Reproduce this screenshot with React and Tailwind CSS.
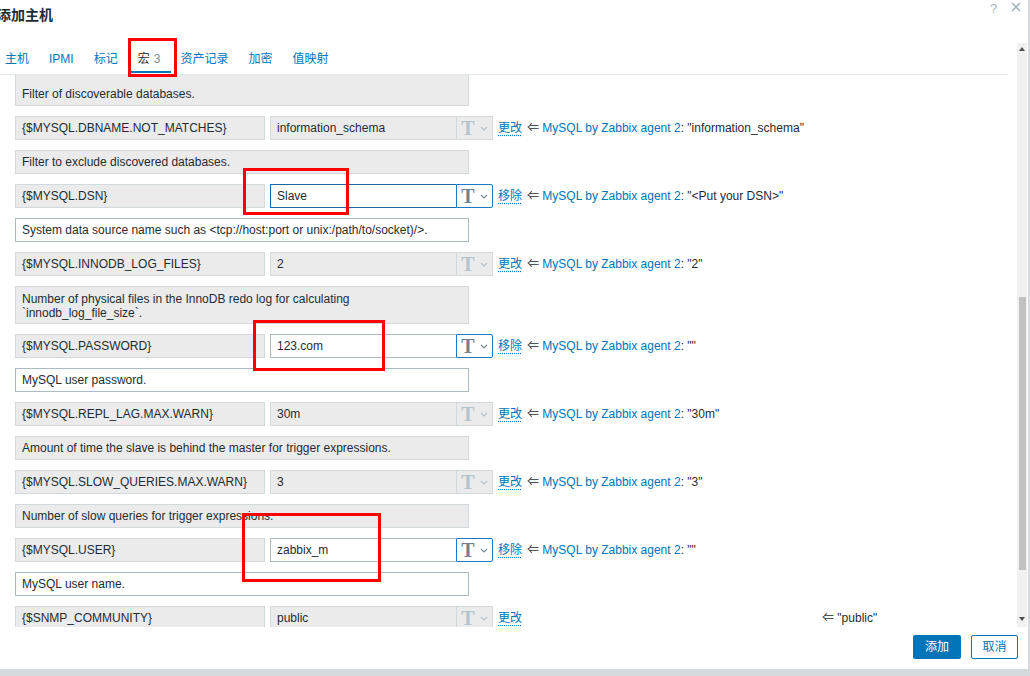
import React from "react";

const rows = [
  { kind: "desc", text: "Filter of discoverable databases.", first: true },
  { kind: "macro", macro: "{$MYSQL.DBNAME.NOT_MATCHES}", value: "information_schema", action: "更改", tpl: '"information_schema"' },
  { kind: "desc", text: "Filter to exclude discovered databases." },
  { kind: "macro", macro: "{$MYSQL.DSN}", value: "Slave", edit: true, focus: true, action: "移除", tpl: '"<Put your DSN>"' },
  { kind: "desc", text: "System data source name such as <tcp://host:port or unix:/path/to/socket)/>.", edit: true },
  { kind: "macro", macro: "{$MYSQL.INNODB_LOG_FILES}", value: "2", action: "更改", tpl: '"2"' },
  { kind: "desc", text: "Number of physical files in the InnoDB redo log for calculating\n`innodb_log_file_size`.", tall: true },
  { kind: "macro", macro: "{$MYSQL.PASSWORD}", value: "123.com", edit: true, action: "移除", tpl: '""' },
  { kind: "desc", text: "MySQL user password.", edit: true },
  { kind: "macro", macro: "{$MYSQL.REPL_LAG.MAX.WARN}", value: "30m", action: "更改", tpl: '"30m"' },
  { kind: "desc", text: "Amount of time the slave is behind the master for trigger expressions." },
  { kind: "macro", macro: "{$MYSQL.SLOW_QUERIES.MAX.WARN}", value: "3", action: "更改", tpl: '"3"' },
  { kind: "desc", text: "Number of slow queries for trigger expressions." },
  { kind: "macro", macro: "{$MYSQL.USER}", value: "zabbix_m", edit: true, action: "移除", tpl: '""' },
  { kind: "desc", text: "MySQL user name.", edit: true },
  { kind: "macro", macro: "{$SNMP_COMMUNITY}", value: "public", action: "更改", global: '"public"' },
];

const tabs = ["主机", "IPMI", "标记", "宏", "资产记录", "加密", "值映射"];

function TypeButton({ edit }) {
  return (
    <div
      className={
        "w-[37px] h-[24px] flex items-center justify-center gap-[5px] border " +
        (edit ? "bg-white border-[#1f78c1] rounded-r-[2px]" : "bg-[#ebebeb] border-[#d3dade]")
      }
    >
      <span
        className={
          "font-['Liberation_Serif',serif] font-bold text-[20px] leading-none " +
          (edit ? "text-[#6e8591]" : "text-[#b7c3ca]")
        }
      >
        T
      </span>
      <svg width="8" height="5" viewBox="0 0 8 5">
        <polyline points="1,1 4,4 7,1" fill="none" stroke={edit ? "#768d99" : "#b7c3ca"} strokeWidth="1.2" />
      </svg>
    </div>
  );
}

function MacroRow({ r }) {
  const valueCls = r.focus
    ? "bg-white border-[#1f65a0]"
    : r.edit
    ? "bg-white border-[#acbbc2]"
    : "bg-[#ebebeb] border-[#d3dade]";
  return (
    <div className="flex items-center h-[24px]">
      <div className="w-[250px] h-[24px] bg-[#ebebeb] border border-[#d3dade] flex items-center pl-[6px]">
        {r.macro}
      </div>
      <div className={"ml-[5px] w-[186px] h-[24px] border border-r-0 flex items-center pl-[6px] " + valueCls}>
        {r.value}
      </div>
      <TypeButton edit={r.edit} />
      <span className="ml-[5px] w-[29px] text-[#0275b8] underline decoration-dotted underline-offset-[3px]">
        {r.action}
      </span>
      <div className="w-[295px] whitespace-nowrap">
        {r.tpl && (
          <>
            <span className="text-[#1f2c33]">⇐ </span>
            <span className="text-[#0275b8]">MySQL by Zabbix agent 2</span>
            <span>: {r.tpl}</span>
          </>
        )}
      </div>
      {r.global && <span className="whitespace-nowrap">⇐ {r.global}</span>}
    </div>
  );
}

function DescRow({ r }) {
  const base = r.edit ? "bg-white border-[#acbbc2]" : "bg-[#ebebeb] border-[#d3dade]";
  if (r.first) {
    return (
      <div className={"w-[454px] h-[31px] border border-t-0 flex items-center pt-[8px] pl-[6px] " + base}>
        {r.text}
      </div>
    );
  }
  return (
    <div
      className={
        "w-[454px] border pl-[6px] whitespace-pre-line leading-[14px] " +
        (r.tall ? "h-[38px] pt-[5px] " : "h-[24px] flex items-center ") +
        base
      }
    >
      {r.text}
    </div>
  );
}

export default function App() {
  return (
    <div className="w-[1030px] h-[676px] bg-[#d5dadd] overflow-hidden relative font-['Liberation_Sans','Noto_Sans_CJK_SC',sans-serif] text-[12px] text-[#1f2c33]">
      <div className="w-[1028px] h-[669px] bg-white flex flex-col overflow-hidden">
        {/* header */}
        <div className="h-[43px] relative shrink-0">
          <div className="absolute left-[-3px] top-[5px] text-[14px] font-bold text-[#1f2c33]">添加主机</div>
          <span className="absolute left-[990px] top-[-1px] text-[13px] text-[#a8b4bb]">?</span>
          <svg className="absolute left-[1011px] top-[2px]" width="10" height="10" viewBox="0 0 10 10">
            <path d="M1 1 L9 9 M9 1 L1 9" stroke="#a8b4bb" strokeWidth="1.6" />
          </svg>
        </div>

        {/* body */}
        <div className="flex flex-1 min-h-0">
          <div className="w-[1008px] flex flex-col min-h-0">
            <div className="h-[32px] border-b border-[#e6e9eb] flex items-end pl-[5px] shrink-0">
              {tabs.map((t) => (
                <div
                  key={t}
                  className={
                    "h-[31px] flex items-center mr-[20px] " +
                    (t === "宏" ? "relative text-[#1f2c33]" : "text-[#0275b8]")
                  }
                >
                  {t === "宏" ? (
                    <>
                      <span>宏</span>
                      <span className="ml-[4px] text-[#768d99]">3</span>
                      <div className="absolute left-[-7px] right-[-11px] bottom-[1px] h-[2px] bg-[#0275b8]" />
                    </>
                  ) : (
                    t
                  )}
                </div>
              ))}
            </div>
            <div className="flex-1 overflow-hidden pl-[15px]">
              <div className="flex flex-col gap-[10px]">
                {rows.map((r, i) =>
                  r.kind === "macro" ? <MacroRow key={i} r={r} /> : <DescRow key={i} r={r} />
                )}
              </div>
            </div>
          </div>
          {/* scrollbar */}
          <div className="ml-[9px] w-[10px] h-[584px] bg-[#f0f0f0] relative">
            <svg className="absolute left-[2px] top-[4px]" width="6" height="4" viewBox="0 0 6 4">
              <polygon points="0,4 3,0 6,4" fill="#505050" />
            </svg>
            <div className="absolute left-[2px] top-[254px] w-[7px] h-[273px] bg-[#c1c1c1]" />
            <svg className="absolute left-[2px] bottom-[6px]" width="6" height="4" viewBox="0 0 6 4">
              <polygon points="0,0 6,0 3,4" fill="#505050" />
            </svg>
          </div>
        </div>

        {/* footer */}
        <div className="h-[42px] shrink-0 flex items-start justify-end gap-[10px] pr-[10px] pt-[8px]">
          <button className="w-[48px] h-[24px] bg-[#0275b8] text-white rounded-[2px] text-[12px]">添加</button>
          <button className="w-[47px] h-[24px] bg-white border border-[#0275b8] text-[#0275b8] rounded-[2px] text-[12px]">
            取消
          </button>
        </div>
      </div>

      {/* annotation boxes */}
      <div className="absolute left-[128px] top-[38px] w-[49px] h-[39px] border-[3px] border-[#ff0000]" />
      <div className="absolute left-[243px] top-[168px] w-[106px] h-[47px] border-[3px] border-[#ff0000]" />
      <div className="absolute left-[253px] top-[320px] w-[132px] h-[51px] border-[3px] border-[#ff0000]" />
      <div className="absolute left-[242px] top-[513px] w-[139px] h-[69px] border-[3px] border-[#ff0000]" />
    </div>
  );
}
